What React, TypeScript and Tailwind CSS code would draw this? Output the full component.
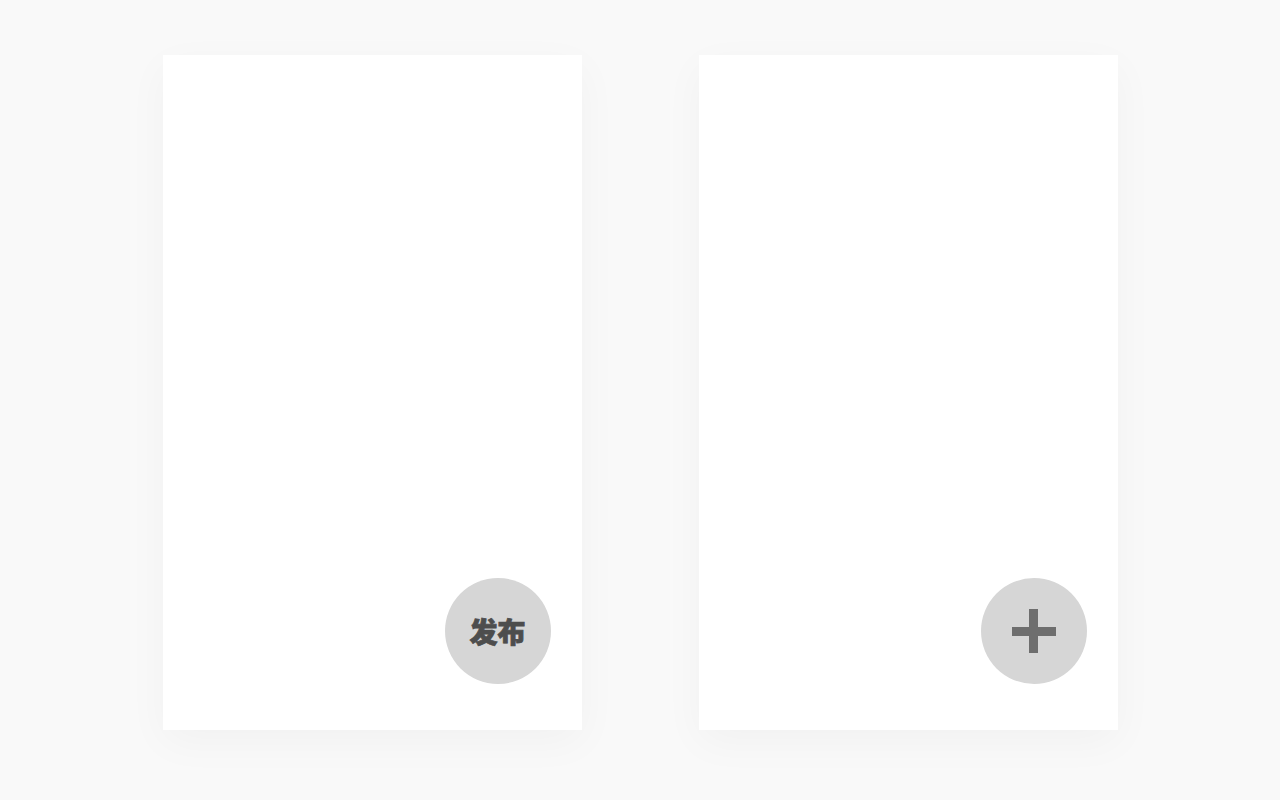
export default function App() {
  return (
    <div className="flex min-h-[800px] w-full justify-center gap-[117px] bg-[#f9f9f9] pt-[55px]">
      <Card>
        <button
          type="button"
          className="flex h-[106px] w-[106px] items-center justify-center rounded-full bg-[#d6d6d6] text-[28px] font-black leading-none text-[#4d4d4d] [-webkit-text-stroke:0.8px_#4d4d4d]"
          style={{ fontFamily: '"Noto Sans CJK SC", "Noto Sans", sans-serif' }}
        >
          发布
        </button>
      </Card>
      <Card>
        <button
          type="button"
          className="relative flex h-[106px] w-[106px] items-center justify-center rounded-full bg-[#d6d6d6]"
        >
          <span className="absolute h-[9px] w-[44px] bg-[#6e6e6e]" />
          <span className="absolute h-[44px] w-[9px] bg-[#6e6e6e]" />
        </button>
      </Card>
    </div>
  )
}

function Card({ children }: { children: React.ReactNode }) {
  return (
    <div className="flex h-[675px] w-[419px] items-end justify-end bg-white pb-[46px] pr-[31px] shadow-[0_12px_40px_rgba(0,0,0,0.035)]">
      {children}
    </div>
  )
}
